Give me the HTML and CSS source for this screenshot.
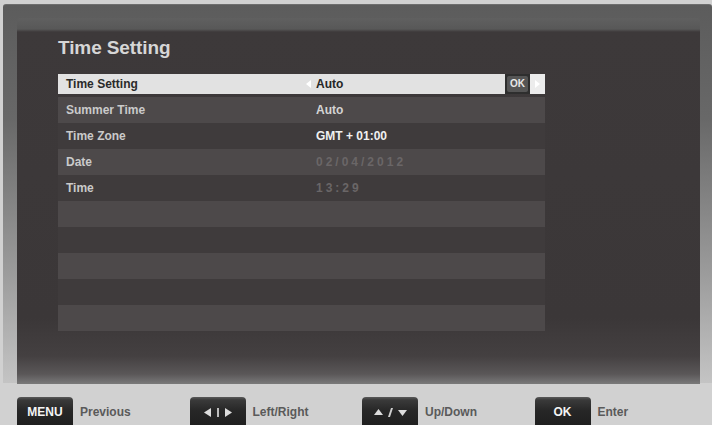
FILE: index.html
```html
<!DOCTYPE html>
<html>
<head>
<meta charset="utf-8">
<link rel="stylesheet" href="styles.css">
</head>
<body>
<div class="frame">
  <div class="panel">
    <h1 class="title">Time Setting</h1>
    <div class="list">
      <div class="bar">
        <span class="label">Time Setting</span>
        <span class="value"><svg class="arr-l" width="5" height="8" viewBox="0 0 5 8"><path d="M5 0 L0 4 L5 8 Z" fill="#ffffff"/></svg>Auto</span>
        <span class="okbox"><span class="okin">OK</span></span>
        <span class="barend"><svg width="5" height="8" viewBox="0 0 5 8"><path d="M0 0 L5 4 L0 8 Z" fill="#ffffff"/></svg></span>
      </div>
      <div class="row light"><span class="label">Summer Time</span><span class="value">Auto</span></div>
      <div class="row dark"><span class="label">Time Zone</span><span class="value bright">GMT + 01:00</span></div>
      <div class="row light"><span class="label">Date</span><span class="value dim">02/04/2012</span></div>
      <div class="row dark"><span class="label">Time</span><span class="value dim">13:29</span></div>
      <div class="row light"></div>
      <div class="row dark"></div>
      <div class="row light"></div>
      <div class="row dark"></div>
      <div class="row light"></div>
    </div>
  </div>
</div>
<div class="footer">
  <div class="hint">
    <span class="btn">MENU</span>
    <span class="hint-text">Previous</span>
  </div>
  <div class="hint">
    <span class="btn"><svg width="28" height="9" viewBox="0 0 28 9"><path d="M7 0 L0 4.5 L7 9 Z" fill="#dcdcdc"/><rect x="13" y="0" width="2" height="9" fill="#bdbdbd"/><path d="M21 0 L28 4.5 L21 9 Z" fill="#dcdcdc"/></svg></span>
    <span class="hint-text">Left/Right</span>
  </div>
  <div class="hint">
    <span class="btn"><svg width="33" height="9" viewBox="0 0 33 9"><path d="M0 7 L4.5 1 L9 7 Z" fill="#dcdcdc"/><path d="M14 9 L17 0 L19 0 L16 9 Z" fill="#cfcfcf"/><path d="M24 2 L33 2 L28.5 8 Z" fill="#dcdcdc"/></svg></span>
    <span class="hint-text">Up/Down</span>
  </div>
  <div class="hint">
    <span class="btn">OK</span>
    <span class="hint-text">Enter</span>
  </div>
</div>
</body>
</html>
```

FILE: styles.css
```css
html, body {
  margin: 0;
  padding: 0;
}
body {
  width: 712px;
  height: 425px;
  overflow: hidden;
  background: #d1d1d1;
  font-family: "Liberation Sans", Arial, sans-serif;
}
.frame {
  margin: 4px 0 0 3px;
  height: 379px;
  box-sizing: border-box;
  padding: 13px 12px 0 14px;
  background: linear-gradient(#5c5c5c 0%, #686868 30%, #9a9a9a 70%, #c4c4c4 100%);
  border-radius: 3px 3px 0 0;
  border-top: 1px solid #6e6e6e;
}
.panel {
  height: 366px;
  box-sizing: border-box;
  padding: 18px 0 0 41px;
  background: linear-gradient(#606060 0px, #585858 11px, #3d393a 14px, #3b3738 300px, #444041 338px, #5a5758 356px, #7a7a7a 366px);
  border-radius: 3px 3px 0 0;
}
.title {
  margin: 0;
  padding-top: 1px;
  font-size: 19px;
  line-height: 22px;
  font-weight: bold;
  color: #d6d6d6;
  letter-spacing: -0.1px;
}
.list {
  width: 487px;
  margin-top: 15px;
}
.bar {
  display: flex;
  align-items: center;
  height: 20px;
  margin-bottom: 3px;
  background: #e2e2e2;
}
.row {
  display: flex;
  align-items: center;
  height: 26px;
}
.row.light {
  background: #4d494a;
}
.row.dark {
  background: #3f3b3c;
}
.label {
  width: 258px;
  box-sizing: border-box;
  padding-left: 8px;
  font-size: 12px;
  font-weight: bold;
  color: #cacaca;
}
.bar .label {
  color: #2a2a2a;
}
.value {
  flex: 1;
  display: flex;
  align-items: center;
  font-size: 12px;
  font-weight: bold;
  color: #d4d4d4;
}
.bar .value {
  color: #262626;
}
.value.bright {
  color: #f0f0f0;
}
.value.dim {
  color: #6a6667;
  letter-spacing: 3px;
}
.arr-l {
  margin-left: -10px;
  margin-right: 5px;
}
.okbox {
  width: 25px;
  height: 20px;
  box-sizing: border-box;
  padding: 2px;
  background: #2e2e2e;
  display: flex;
}
.okin {
  flex: 1;
  background: #555;
  border-radius: 2px;
  color: #e8e8e8;
  font-size: 10px;
  font-weight: bold;
  line-height: 16px;
  text-align: center;
}
.barend {
  width: 15px;
  height: 20px;
  background: #ececec;
  display: flex;
  align-items: center;
  justify-content: center;
}
.footer {
  display: grid;
  grid-template-columns: repeat(4, 172.5px);
  padding: 14px 0 0 17px;
}
.hint {
  display: flex;
  align-items: center;
  gap: 7px;
}
.btn {
  width: 56px;
  height: 30px;
  border-radius: 4px 4px 0 0;
  background: linear-gradient(#5a5a5a 0px, #3a3a3a 3px, #262626 14px, #1e1e1e 30px);
  color: #f4f4f4;
  font-size: 12px;
  font-weight: bold;
  display: flex;
  align-items: center;
  justify-content: center;
}
.hint-text {
  font-size: 12px;
  font-weight: bold;
  color: #5a5a5a;
}
```
